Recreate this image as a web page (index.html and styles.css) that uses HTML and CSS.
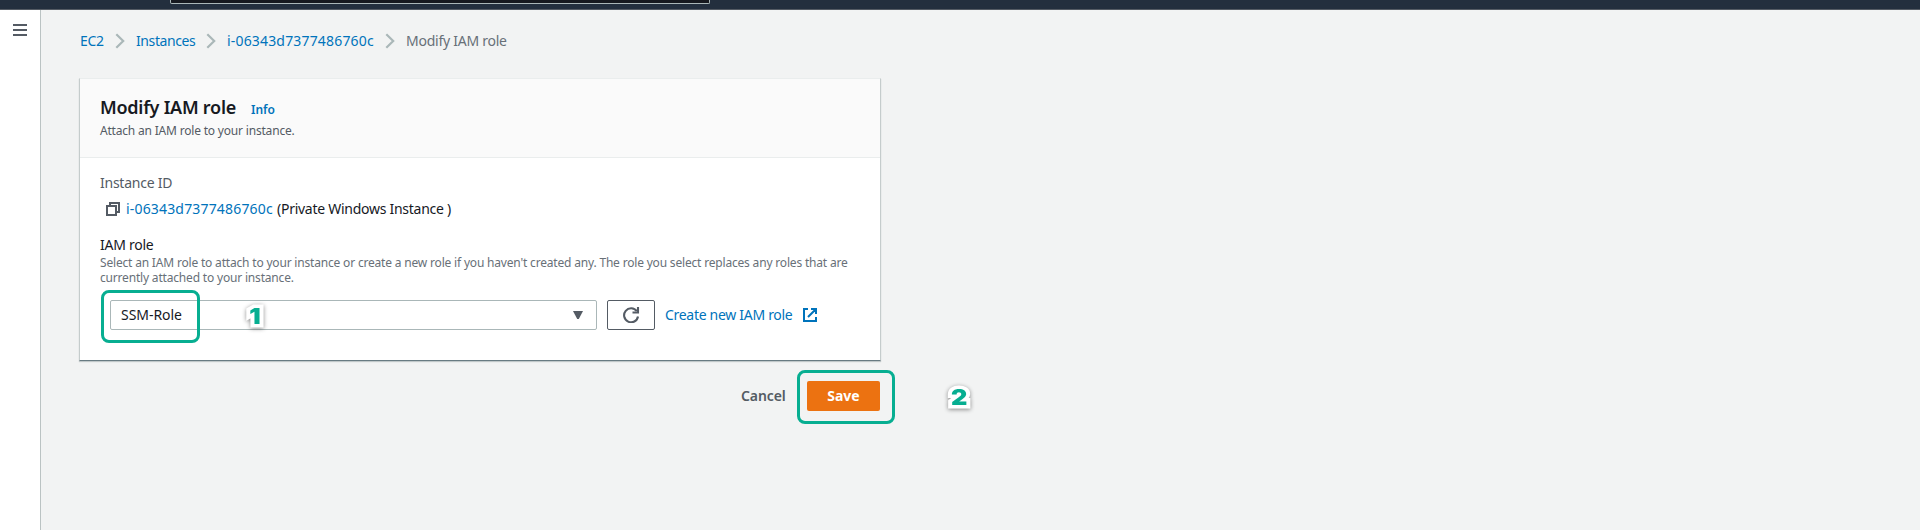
FILE: index.html
```html
<!DOCTYPE html>
<html lang="en">
<head>
<meta charset="utf-8">
<title>Modify IAM role</title>
<link rel="stylesheet" href="styles.css">
</head>
<body>
<header class="topbar"><div class="search"></div></header>
<div class="layout">
  <aside class="sidebar">
    <svg class="menu" width="14" height="12" viewBox="0 0 14 12"><path d="M0 1h14M0 6h14M0 11h14" stroke="#545b64" stroke-width="2"/></svg>
  </aside>
  <main class="main">
    <nav class="crumbs">
      <a class="crumb-ec2">EC2</a>
      <svg class="chev" width="11" height="16" viewBox="0 0 11 16"><path d="M1.300 1.200L8.200 8l-6.900 6.800" fill="none" stroke="#aab7b8" stroke-width="2.200"/></svg>
      <a class="crumb-instances">Instances</a>
      <svg class="chev" width="11" height="16" viewBox="0 0 11 16"><path d="M1.300 1.200L8.200 8l-6.900 6.800" fill="none" stroke="#aab7b8" stroke-width="2.200"/></svg>
      <a class="crumb-id">i-06343d7377486760c</a>
      <svg class="chev" width="11" height="16" viewBox="0 0 11 16"><path d="M1.300 1.200L8.200 8l-6.900 6.800" fill="none" stroke="#aab7b8" stroke-width="2.200"/></svg>
      <span class="crumb-current">Modify IAM role</span>
    </nav>
    <section class="card">
      <div class="card-head">
        <div class="title-row"><h1 class="title">Modify IAM role</h1><a class="info">Info</a></div>
        <p class="subtitle">Attach an IAM role to your instance.</p>
      </div>
      <div class="card-body">
        <div class="label muted">Instance ID</div>
        <div class="instance">
          <svg width="14" height="14" viewBox="0 0 14 14" fill="none" stroke="#545b64" stroke-width="2"><path d="M1 4h9v9H1zM4 4V1h9v9h-3"/></svg>
          <a class="instance-id">i-06343d7377486760c</a>
          <span class="instance-name">(Private Windows Instance )</span>
        </div>
        <div class="label">IAM role</div>
        <p class="hint">Select an IAM role to attach to your instance or create a new role if you haven't created any. The role you select replaces any roles that are<br>currently attached to your instance.</p>
        <div class="controls">
          <div class="select"><span class="value">SSM-Role</span>
            <svg width="10" height="8" viewBox="0 0 10 8"><path d="M0 0h10L5.800 8H4.200z" fill="#545b64"/></svg>
            <span class="mark mark-select"></span>
            <span class="step step-one">1</span>
          </div>
          <button class="refresh" aria-label="Refresh">
            <svg width="17" height="16" viewBox="0 0 17 16" fill="none" stroke="#545b64" stroke-width="2.100"><path d="M15 9.500A7 7 0 1 1 13.800 4.200"/><path d="M15 0v5.500H9.500"/></svg>
          </button>
          <a class="create">Create new IAM role</a>
          <svg width="14" height="14" viewBox="0 0 14 14" fill="none" stroke="#0073bb" stroke-width="2"><path d="M5 1H1v12h12V9M8 1h5v5M13 1L5 9"/></svg>
        </div>
      </div>
    </section>
    <div class="actions">
      <button class="cancel">Cancel</button>
      <button class="save"><span>Save</span><i class="mark mark-save"></i><i class="step step-two">2</i></button>
    </div>
  </main>
</div>
</body>
</html>
```
FILE: styles.css
```css
* { box-sizing: border-box; }
body { margin: 0; height: 530px; overflow: hidden; background: #f2f3f3; color: #16191f; font: 14px/22px "Noto Sans", sans-serif; }
h1, p { margin: 0; }
a { color: #0073bb; white-space: nowrap; }
svg { display: block; flex: none; }
button { font: inherit; padding: 0; margin: 0; }
.topbar { height: 10px; background: #232f3e; border-bottom: 1px solid #545b64; padding-left: 170px; }
.search { width: 540px; height: 4px; background: #16191f; border: 1px solid #aab7b8; border-top: 0; border-radius: 0 0 2px 2px; }
.layout { display: flex; height: 520px; }
.sidebar { width: 41px; background: #fff; border-right: 1px solid #bbc3c3; padding: 14px 0 0 13px; }
.main { width: 840px; padding: 20px 0 0 38px; }
.crumbs { display: flex; align-items: center; height: 22px; padding-left: 1px; color: #687078; }
.crumbs .chev { margin-right: 10px; }
.crumb-ec2 { width: 35px; letter-spacing: -.3px; }
.crumb-instances { width: 70px; letter-spacing: -.4px; }
.crumb-id { width: 158px; letter-spacing: .17px; }
.crumb-current { letter-spacing: -.25px; white-space: nowrap; }
.card { margin-top: 26px; width: 802px; height: 283px; background: #fff; border: 1px solid #c5cccc; border-top-color: #eaeded; border-bottom-color: #687b82; box-shadow: 0 1px 1px rgba(0,28,36,.2); }
.card-head { height: 79px; background: #fafafa; border-bottom: 1px solid #eaeded; padding: 16px 20px 0; }
.title-row { display: flex; align-items: baseline; height: 24px; }
.title { width: 151px; font-size: 18px; line-height: 24px; font-weight: 600; letter-spacing: -.25px; white-space: nowrap; }
.info { font-size: 12px; font-weight: 600; }
.subtitle { font-size: 12px; line-height: 20px; color: #545b64; margin-top: 2px; letter-spacing: -.19px; }
.card-body { padding: 14px 20px 0; }
.label { height: 22px; letter-spacing: -.25px; }
.muted { color: #545b64; }
.instance { display: flex; align-items: center; height: 22px; margin: 4px 0 14px; padding-left: 6px; }
.instance-id { width: 151px; margin-left: 6px; letter-spacing: .17px; }
.instance-name { letter-spacing: -.27px; white-space: nowrap; }
.hint { font-size: 12px; line-height: 15px; color: #687078; letter-spacing: -.183px; white-space: nowrap; margin-top: -1px; }
.controls { display: flex; align-items: center; margin: 15px 0 0 10px; height: 30px; }
.select { position: relative; display: flex; align-items: center; justify-content: space-between; width: 487px; height: 30px; border: 1px solid #aab7b8; border-radius: 2px; padding: 0 13px 0 10px; }
.value { letter-spacing: -.05px; }
.refresh { display: flex; align-items: center; justify-content: center; width: 48px; height: 30px; margin: 0 10px; background: #fff; border: 1px solid #545b64; border-radius: 2px; }
.create { width: 138px; letter-spacing: -.3px; }
.mark { position: absolute; border: 3px solid #07ae91; border-radius: 8px; }
.mark-select { left: -10px; top: -11px; width: 99px; height: 53px; }
.mark-save { left: -10px; top: -11px; width: 98px; height: 54px; }
.step { position: absolute; font: 900 22px/24px Inter, "Open Sans", sans-serif; color: #07ae91; -webkit-text-stroke: 7px #fff; paint-order: stroke fill; stroke-linejoin: round; filter: drop-shadow(0 1px 2px rgba(0,0,0,.45)); transform: scaleX(1.15); }
.step-one { left: 139px; top: 3px; }
.step-two { left: 145px; top: 4px; }
.actions { display: flex; justify-content: flex-end; margin-top: 20px; width: 801px; height: 30px; }
.cancel { width: 44px; margin-right: 22px; border: 0; background: none; color: #545b64; font-weight: 600; letter-spacing: -.1px; }
.save { position: relative; width: 73px; height: 30px; border: 0; border-radius: 2px; background: #ec7211; color: #fff; font-weight: 700; }
```
